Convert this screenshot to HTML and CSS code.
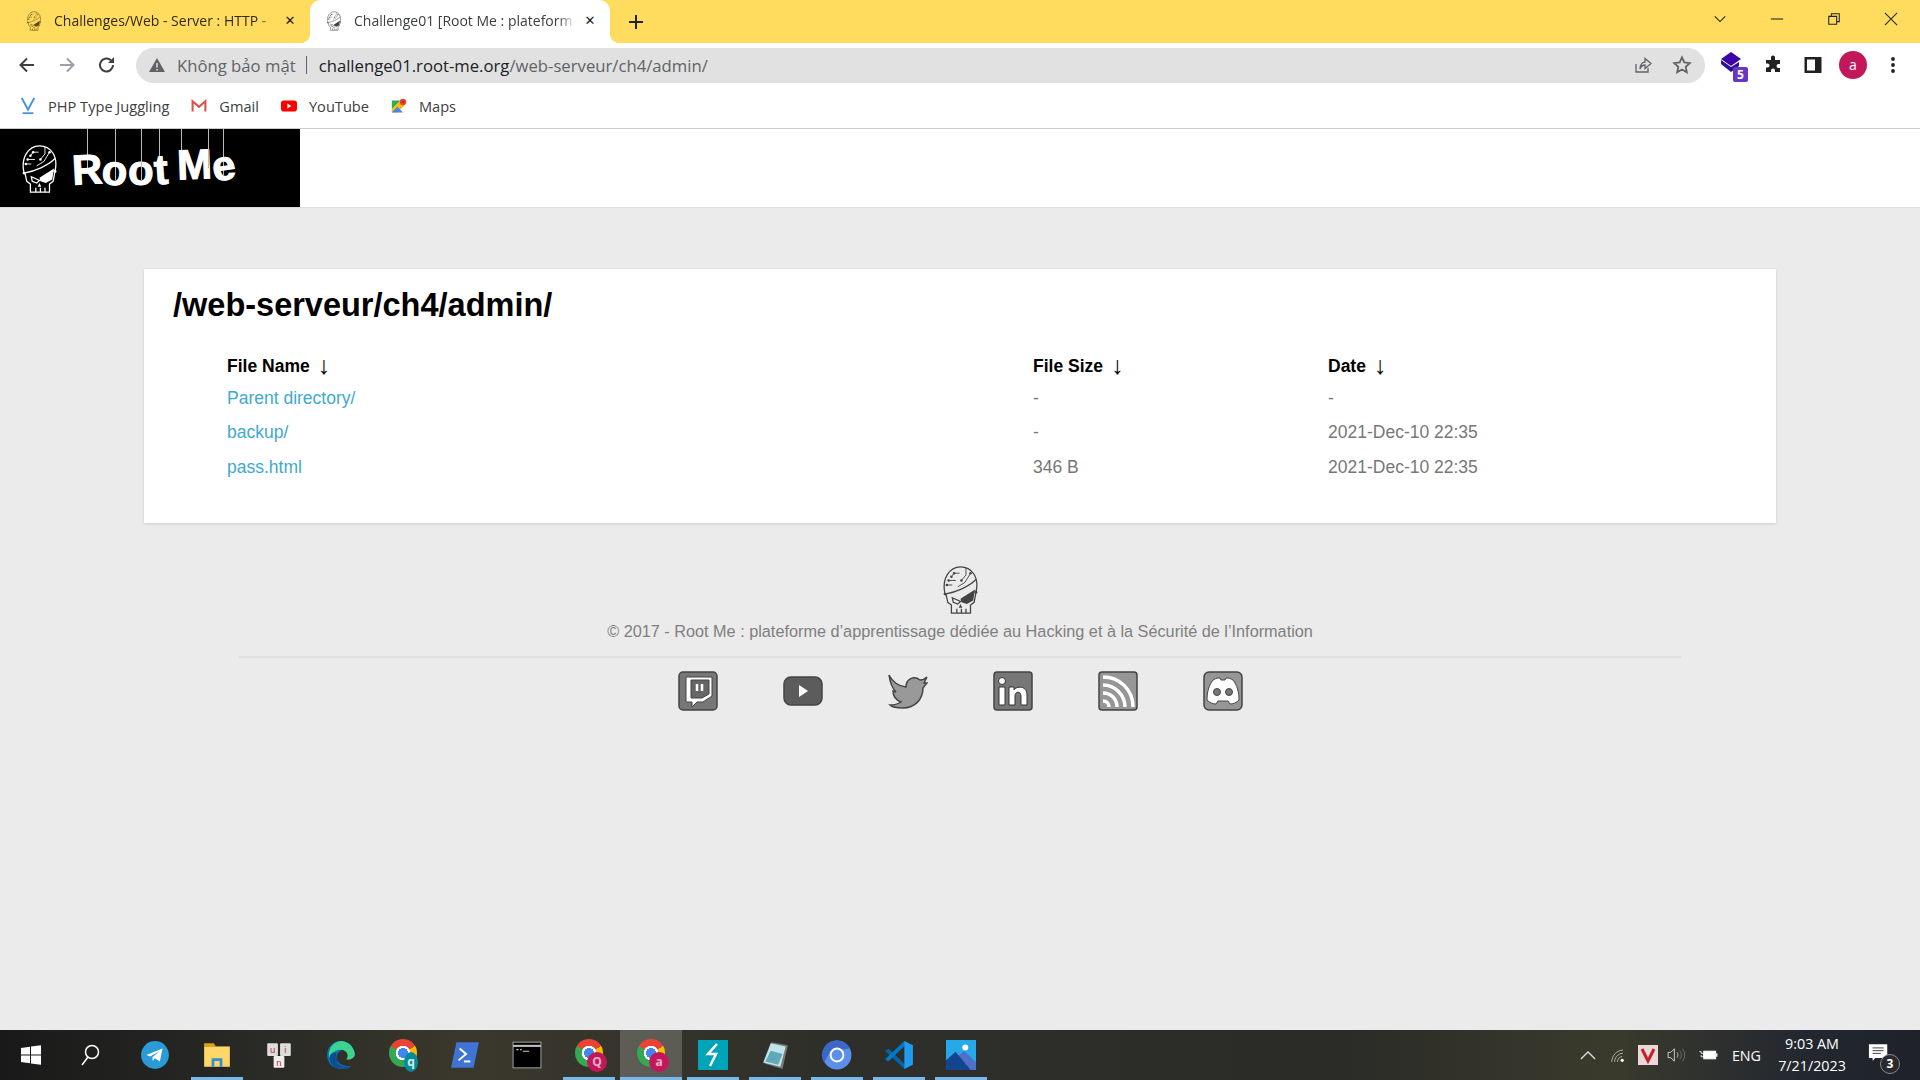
FILE: index.html
```html
<!DOCTYPE html>
<html>
	<head>
		<meta charset="utf-8">
		<title>Challenge01 [Root Me : plateforme]</title>
		<link rel="stylesheet" href="styles.css">
	</head>
	<body>
		<svg class="sprite">
			<symbol id="skull" viewBox="10 3 40 55">
				<g fill="none" stroke="currentColor" stroke-width="1.400">
					<path d="M13 35C9 18 18 5 30 5S51 16 47 33"/>
					<path d="M13 35C25 33 39 27 47 19"/>
					<path d="M14 35L16 44L20 47V56H41V47L45 44L47 33"/>
					<path d="M26 56V51M31 56V51M36 56V51"/>
					<path d="M21 39L30 43L27 46L22 44Z"/>
					<path d="M29 12H23L20 16M36 6V14L31 20M25 20H17M41 12L35 22L27 27M21 25H15" stroke-width="1"/>
				</g>
				<path fill="currentColor" d="M30 40L46 30L44 42L37 46L31 44Z"/>
				<path fill="currentColor" d="M30 46L32 50H28Z"/>
				<g fill="currentColor">
					<circle cx="23" cy="12" r="1.400"/><circle cx="20" cy="16" r="1.400"/><circle cx="17" cy="20" r="1.400"/>
					<circle cx="31" cy="20" r="1.400"/><circle cx="41" cy="12" r="1.400"/><circle cx="15" cy="25" r="1.400"/>
					<circle cx="13" cy="35" r="1.600"/><circle cx="47" cy="33" r="1.600"/>
				</g>
			</symbol>
		</svg>

		<div class="tabstrip">
			<div class="tab">
				<svg class="favicon favicon-warm"><use href="#skull"/></svg>
				<span class="tab-title">Challenges/Web - Server : HTTP -</span>
				<span class="tab-close">&#10005;</span>
			</div>
			<div class="tab tab-active">
				<svg class="favicon"><use href="#skull"/></svg>
				<span class="tab-title">Challenge01 [Root Me : plateform</span>
				<span class="tab-close">&#10005;</span>
			</div>
			<svg class="new-tab" viewBox="0 0 16 16"><path d="M8 1V15M1 8H15"/></svg>
			<div class="window-btns">
				<svg viewBox="0 0 16 16"><path d="M2 5L8 11L14 5"/></svg>
				<svg viewBox="0 0 16 16"><path d="M1 8H15"/></svg>
				<svg viewBox="0 0 16 16"><path d="M2 5H11V14H2ZM5 5V2H14V11H11"/></svg>
				<svg viewBox="0 0 16 16"><path d="M1 1L15 15M15 1L1 15"/></svg>
			</div>
		</div>

		<div class="toolbar">
			<div class="tool-btn"><svg viewBox="0 0 20 20"><path class="ic-line" d="M17 10H4M10 3.500L3.500 10L10 16.500"/></svg></div>
			<div class="tool-btn"><svg viewBox="0 0 20 20"><path class="ic-line ic-muted" d="M3 10H16M10 3.500L16.500 10L10 16.500"/></svg></div>
			<div class="tool-btn"><svg viewBox="0 0 20 20"><path class="ic-line" d="M16 10A6.500 6.500 0 1 1 14 5.300"/><path class="ic-fill" d="M17 2V8H11Z"/></svg></div>
			<div class="address">
				<svg class="warn" viewBox="0 0 18 18"><path d="M9 2L17 16H1Z" fill="#5f6368"/><path d="M9 7V11.500M9 13V14.500" stroke="#e1e1e1" stroke-width="1.500"/></svg>
				<span class="insecure">Không bảo mật</span>
				<span class="addr-sep"></span>
				<span class="url"><b>challenge01.root-me.org</b>/web-serveur/ch4/admin/</span>
				<div class="tool-btn addr-share"><svg viewBox="0 0 20 20"><path class="ic-thin" d="M3 9V17H15V13M7 14C7 9 10 7 12 7V3.500L18 8.500L12 13.500V10C10 10 8 11 7 14Z"/></svg></div>
				<div class="tool-btn"><svg viewBox="0 0 20 20"><path class="ic-star" d="M10 2.500L12.300 7.500L17.800 8.100L13.700 11.800L14.800 17.200L10 14.500L5.200 17.200L6.300 11.800L2.200 8.100L7.700 7.500Z"/></svg></div>
			</div>
			<div class="tool-right">
				<div class="tool-btn ext-btn">
					<svg viewBox="0 0 24 24"><path fill="#3d05a8" d="M12 1L22 8L12 15L2 8Z"/><path fill="#2c0f9e" d="M2 9L12 16L20 11V15L12 21L2 13Z"/></svg>
					<span class="ext-badge">5</span>
				</div>
				<div class="tool-btn"><svg viewBox="0 0 20 20"><path class="ic-dark" d="M8 2A2 2 0 0 1 12 3V5H17V9H15.500A2 2 0 0 0 15.500 13H17V17H12V15.500A2 2 0 0 0 8 15.500V17H3V12.500H4.500A2 2 0 0 0 4.500 8.500H3V5H8Z"/></svg></div>
				<div class="tool-btn"><svg viewBox="0 0 20 20"><path class="ic-dark" fill-rule="evenodd" d="M1.500 2H18.500V18H1.500ZM4 4.500V15.500H12V4.500Z"/></svg></div>
				<div class="tool-btn"><span class="avatar">a</span></div>
				<div class="tool-btn"><svg viewBox="0 0 20 20"><g class="ic-dark"><circle cx="10" cy="4" r="1.900"/><circle cx="10" cy="10" r="1.900"/><circle cx="10" cy="16" r="1.900"/></g></svg></div>
			</div>
		</div>

		<div class="bookmarks">
			<div class="bookmark">
				<svg viewBox="0 0 16 20"><path d="M1 1L8 14L15 1" fill="none" stroke="#4a90d9" stroke-width="2.200"/><path d="M2 18H14" stroke="#4a90d9" stroke-width="2"/></svg>
				<span>PHP Type Juggling</span>
			</div>
			<div class="bookmark">
				<svg viewBox="0 0 20 16"><path d="M2 15V2L10 9L18 2V15" fill="none" stroke="#d9534a" stroke-width="2.600"/></svg>
				<span>Gmail</span>
			</div>
			<div class="bookmark">
				<svg viewBox="0 0 20 16"><rect y="1" width="20" height="14" rx="3.500" fill="#f00"/><path d="M8 5L13 8L8 11Z" fill="#fff"/></svg>
				<span>YouTube</span>
			</div>
			<div class="bookmark">
				<svg viewBox="0 0 20 20"><path d="M1 3L12 3L1 14Z" fill="#34a853"/><path d="M12 3L1 14V18H8L17 9Z" fill="#fbbc04"/><path d="M1 18L8 11L15 18Z" fill="#4285f4"/><circle cx="15" cy="5" r="4" fill="#ea4335"/><circle cx="15" cy="5" r="1.400" fill="#a52714"/></svg>
				<span>Maps</span>
			</div>
		</div>

		<div class="page">
			<div class="site-header">
				<div class="logo">
					<svg class="logo-skull"><use href="#skull"/></svg>
					<div class="logo-word">
						<span class="letter letter-r"><span class="glyph glyph-r">R</span></span>
						<span class="letter letter-o"><span class="glyph glyph-o">o</span></span>
						<span class="letter letter-o"><span class="glyph">o</span></span>
						<span class="letter letter-t"><span class="glyph glyph-t">t</span></span>
						<span class="letter letter-m"><span class="glyph glyph-m">M</span></span>
						<span class="letter letter-e"><span class="glyph glyph-e">e</span></span>
					</div>
				</div>
			</div>

			<div class="card">
				<h1>/web-serveur/ch4/admin/</h1>
				<table class="listing">
					<tr>
						<th class="col-name">File Name <span class="sort">↓</span></th>
						<th class="col-size">File Size <span class="sort">↓</span></th>
						<th>Date <span class="sort">↓</span></th>
					</tr>
					<tr>
						<td><a href="#">Parent directory/</a></td>
						<td>-</td>
						<td>-</td>
					</tr>
					<tr>
						<td><a href="#">backup/</a></td>
						<td>-</td>
						<td>2021-Dec-10 22:35</td>
					</tr>
					<tr>
						<td><a href="#">pass.html</a></td>
						<td>346 B</td>
						<td>2021-Dec-10 22:35</td>
					</tr>
				</table>
			</div>

			<div class="site-footer">
				<svg class="footer-skull"><use href="#skull"/></svg>
				<p class="copyright">© 2017 - Root Me : plateforme d’apprentissage dédiée au Hacking et à la Sécurité de l’Information</p>
				<div class="socials">
					<svg viewBox="0 0 40 40"><rect class="soc-box" x="1" y="1" width="38" height="38" rx="4"/><path d="M8 6H34V25L25 31H19L14 36V31H8Z" fill="#fff" stroke="#444" stroke-width="1"/><path d="M13 9H31V23L24 27H13Z" fill="#666" stroke="#444"/><path d="M19 13V20M24 13V20" stroke="#fff" stroke-width="2.500"/></svg>
					<svg viewBox="0 0 40 40"><rect x="1" y="6" width="38" height="28" rx="7" fill="#5c5c5c" stroke="#444" stroke-width="1.500"/><path d="M16 14L25 20L16 26Z" fill="#fff"/></svg>
					<svg viewBox="0 0 40 40"><path d="M1 4C5 12 10 15 18 16C18 8 26 4 32 9C34 9 37 8 39 6L36 12L39 12C37 14 36 16 35 17C35 28 27 37 15 37C9 37 4 36 2 34C7 34 10 33 13 31C8 29 5 25 5 20L8 21C4 17 2 11 1 4Z" fill="#999" stroke="#444" stroke-width="1.500"/></svg>
					<svg viewBox="0 0 40 40"><rect class="soc-box" x="1" y="1" width="38" height="38" rx="3"/><circle cx="9" cy="10" r="3.500" fill="#fff" stroke="#333"/><path d="M6 16H12V34H6ZM16 16H21V19C23 15 34 14 34 24V34H28V25C28 20 22 20 22 25V34H16Z" fill="#fff" stroke="#333"/></svg>
					<svg viewBox="0 0 40 40"><rect class="soc-box soc-light" x="1" y="1" width="38" height="38" rx="3"/><g fill="none" stroke="#fff" stroke-width="3.500"><path d="M5 6C22 6 35 19 35 36"/><path d="M5 14C17 14 27 24 27 36"/><path d="M5 22C13 22 19 28 19 36"/><path d="M5 30C9 30 11 33 11 36"/></g></svg>
					<svg viewBox="0 0 40 40"><rect class="soc-box soc-light" x="1" y="1" width="38" height="38" rx="5"/><path d="M10 9C13 7 15 7 17 7L18 9H22L23 7C25 7 27 7 30 9C34 14 36 21 36 29C33 32 30 33 27 33L25 30H15L13 33C10 33 7 32 4 29C4 21 6 14 10 9Z" fill="#fff" stroke="#444"/><circle cx="14" cy="21" r="3.500" fill="#777" stroke="#444"/><circle cx="26" cy="21" r="3.500" fill="#777" stroke="#444"/></svg>
				</div>
			</div>
		</div>

		<div class="taskbar">
			<div class="task-item task-small"><svg viewBox="0 0 24 24"><path fill="#fff" d="M2 5L11 3.800V11.500H2ZM12 3.600L22 2.200V11.500H12ZM2 12.500H11V20.200L2 19ZM12 12.500H22V21.800L12 20.400Z"/></svg></div>
			<div class="task-item task-small task-search"><svg viewBox="0 0 24 24"><circle cx="14" cy="9" r="6.500" fill="none" stroke="#fff" stroke-width="1.500"/><path d="M10 14L4 22" stroke="#fff" stroke-width="1.500"/></svg></div>
			<div class="task-item"><svg viewBox="0 0 28 28"><circle cx="14" cy="14" r="13" fill="#2a9bd6"/><path d="M6 14L21 8L18.500 20L14 17L12 19.500L11.500 16L18 10.500L9.500 15.500Z" fill="#fff"/></svg></div>
			<div class="task-item task-open"><svg viewBox="0 0 28 28"><path fill="#e0a010" d="M2 3H11L13 6H2Z"/><path fill="#ffd768" d="M2 6H26V25H2Z"/><path fill="#2f8fd8" d="M9 25V17H19V25H16.500V19.500H11.500V25Z"/></svg></div>
			<div class="task-item"><svg viewBox="0 0 28 28"><rect x="3" y="3" width="10" height="12" rx="1" fill="#ddd"/><rect x="15" y="3" width="10" height="12" rx="1" fill="#ddd"/><rect x="9" y="15" width="10" height="11" rx="1" fill="#eee"/><text class="key-text" x="8" y="12">u</text><text class="key-text" x="20" y="12">i</text><text class="key-text" x="14" y="24">n</text></svg></div>
			<div class="task-item"><svg viewBox="0 0 28 28"><path fill="#0c6fc0" d="M14 1C6 1 1 7 1 14C1 22 7 27 15 27C19 27 22 26 24 24C18 25 11 23 10 17C9.500 12 14 9 17 9C22 9 27 12 27 15C27 7 21 1 14 1Z"/><path fill="#3bd38f" d="M14 1C20 1 26 6 27 13C27 17 22 19 19 18C22 14 19 9 14 9C9 9 5 12 3 17C1 9 7 1 14 1Z"/><path fill="#0b4e91" d="M10 17C9 23 16 27 24 24C20 27 10 29 5 22C3 19 3 16 4 14C5 12 8 11 10 12C9 13 9.600 15 10 17Z"/></svg></div>
			<div class="task-item">
				<span class="chrome-icon"><span class="chrome-badge chrome-badge-teal">q</span></span>
			</div>
			<div class="task-item"><svg viewBox="0 0 28 28"><path fill="#3f74d6" d="M6 2H27L22 26H1Z"/><path d="M9 8L15 13L8 19" fill="none" stroke="#fff" stroke-width="1.800"/><path d="M13 20H19" stroke="#fff" stroke-width="1.800"/></svg></div>
			<div class="task-item"><svg viewBox="0 0 28 28"><rect x="1" y="2" width="26" height="24" fill="#000" stroke="#999"/><path d="M1 5.500H27" stroke="#bbb" stroke-width="2"/><path d="M4 9H6M7.500 9H9M10 10.500H16" stroke="#ccc"/></svg></div>
			<div class="task-item task-open">
				<span class="chrome-icon"><span class="chrome-badge">Q</span></span>
			</div>
			<div class="task-item task-open task-current">
				<span class="chrome-icon"><span class="chrome-badge">a</span></span>
			</div>
			<div class="task-item task-open"><svg viewBox="0 0 30 30"><rect width="30" height="30" fill="#00a4b8"/><path d="M19 4L10 14L18 14L12 26" fill="none" stroke="#fff" stroke-width="2.500"/></svg></div>
			<div class="task-item task-open"><svg viewBox="0 0 28 28"><path fill="#777" d="M11 2L26 5L21 27L4 22Z"/><path fill="#bfe4ea" d="M10 3L24 6L19 25L3 21Z"/><path fill="#5fa9b8" d="M10 10L21 13L17 23L5 20Z"/></svg></div>
			<div class="task-item task-open"><svg viewBox="0 0 28 28"><circle cx="14" cy="14" r="13.500" fill="#5c8fe8"/><path fill="#3b67c9" d="M14 .500A13.500 13.500 0 0 0 2 21L8 10L26 8A13.500 13.500 0 0 0 14 .500Z"/><circle cx="14" cy="14" r="6" fill="#5c8fe8" stroke="#fff" stroke-width="1.800"/></svg></div>
			<div class="task-item task-open"><svg viewBox="0 0 28 28"><path fill="#0065a9" d="M1 10L4 8L21 24L19 27Z"/><path fill="#007acc" d="M1 18L4 20L21 4L19 1Z"/><path fill="#1f9cf0" d="M19 1L27 5V23L19 27Z"/></svg></div>
			<div class="task-item task-open"><svg viewBox="0 0 28 28"><rect width="28" height="28" y="0" fill="#27a9e8"/><circle cx="18" cy="7" r="2.800" fill="#fff"/><path fill="#4f70c8" d="M10 16L17 10L28 21V28H14Z"/><path fill="#13448e" d="M0 19L9 11L23 28H0Z"/></svg></div>

			<div class="tray">
				<svg class="tray-chevron" viewBox="0 0 18 10"><path d="M1 9L9 1L17 9"/></svg>
				<svg class="tray-wifi" viewBox="0 0 20 18"><g fill="none" stroke="#ccc" stroke-width="1"><path d="M1 17C1 10 6 3 15 2"/><path d="M4.500 17C4.500 12 8 7 15 6"/><path d="M8 17C8 14 10 11 14 10"/></g><circle cx="14" cy="15" r="2" fill="#fff"/></svg>
				<svg class="tray-v" viewBox="0 0 20 20"><rect width="20" height="20" fill="#ecd8d8"/><path d="M4 4L10 16L16 4" fill="none" stroke="#c02028" stroke-width="3"/></svg>
				<svg class="tray-sound" viewBox="0 0 22 18"><path d="M1 6H4L8 2V16L4 12H1Z" fill="none" stroke="#ddd"/><path d="M11 6C12.500 8 12.500 10 11 12" fill="none" stroke="#ccc"/><path d="M14 4C16.500 7 16.500 11 14 14" fill="none" stroke="#777"/><path d="M17 2C20.500 6 20.500 12 17 16" fill="none" stroke="#777"/></svg>
				<svg class="tray-battery" viewBox="0 0 22 14"><path d="M1 3H3V5H6V9H3V7" fill="none" stroke="#fff"/><rect x="6" y="2.500" width="14" height="9" fill="#fff" stroke="#fff"/><rect x="20.500" y="5" width="1.500" height="4" fill="#fff"/></svg>
				<span class="tray-lang">ENG</span>
				<div class="clock"><span>9:03 AM</span><span>7/21/2023</span></div>
				<div class="notify">
					<svg viewBox="0 0 24 20"><path d="M1 1H21V16H8L5 19V16H1Z" fill="#fff"/><path d="M5 5H17M5 8H17M5 11H14" stroke="#333"/></svg>
					<span class="notify-count">3</span>
				</div>
			</div>
		</div>
	</body>
</html>
```

FILE: styles.css
```css
*{
	margin: 0;
	padding: 0;
	box-sizing: border-box;
}
html,body{
	height: 100%;
	overflow: hidden;
}
body{
	display: flex;
	flex-direction: column;
	width: 1920px;
	height: 1080px;
	font-family: "Open Sans","Liberation Sans",sans-serif;
	background: #ebebeb;
}
.sprite{
	display: none;
}

/* browser tabs */
.tabstrip{
	display: flex;
	align-items: stretch;
	height: 43px;
	padding-left: 10px;
	background: #ffdc5d;
	color: #2f2b18;
}
.tab{
	display: flex;
	align-items: center;
	gap: 12px;
	width: 300px;
	padding: 0 12px 2px 16px;
	font-size: 14px;
	position: relative;
}
.tab-active{
	background: #fff;
	border-radius: 11px 11px 0 0;
	color: #3c4043;
}
.tab-active::before,
.tab-active::after{
	content: "";
	position: absolute;
	bottom: 0;
	width: 10px;
	height: 10px;
}
.tab-active::before{
	left: -10px;
	background: radial-gradient(circle at 0 0,transparent 10px,#fff 10.5px);
}
.tab-active::after{
	right: -10px;
	background: radial-gradient(circle at 100% 0,transparent 10px,#fff 10.5px);
}
.favicon{
	flex: none;
	width: 16px;
	height: 20px;
	color: #444;
}
.favicon-warm{
	color: #5c4a10;
}
.tab-title{
	flex: 1;
	overflow: hidden;
	white-space: nowrap;
	-webkit-mask-image: linear-gradient(90deg,#000 92%,transparent);
	mask-image: linear-gradient(90deg,#000 92%,transparent);
}
.tab-close{
	flex: none;
	width: 16px;
	margin-left: -6px;
	text-align: center;
	font-size: 13px;
	font-weight: bold;
	font-family: "DejaVu Sans",sans-serif;
	color: #222;
}
.new-tab{
	align-self: center;
	width: 16px;
	height: 16px;
	margin-left: 18px;
	fill: none;
	stroke: #222;
	stroke-width: 2;
}
.window-btns{
	display: flex;
	align-items: center;
	gap: 43px;
	margin-left: auto;
	padding: 0 22px 6px 0;
}
.window-btns svg{
	width: 14px;
	height: 14px;
	fill: none;
	stroke: #222;
	stroke-width: 1.200;
}

/* browser toolbar */
.toolbar{
	display: flex;
	align-items: center;
	height: 43px;
	padding: 1px 0 0 7px;
	background: #fff;
}
.tool-btn{
	flex: none;
	display: flex;
	align-items: center;
	justify-content: center;
	width: 40px;
	height: 35px;
	position: relative;
}
.tool-btn svg{
	width: 20px;
	height: 20px;
}
.ic-line{
	fill: none;
	stroke: #3c4043;
	stroke-width: 2;
}
.ic-muted{
	stroke: #9aa0a6;
}
.ic-fill{
	fill: #3c4043;
}
.ic-thin{
	fill: none;
	stroke: #5f6368;
	stroke-width: 1.300;
}
.ic-star{
	fill: none;
	stroke: #5f6368;
	stroke-width: 1.800;
}
.ic-dark{
	fill: #202124;
}
.address{
	flex: 1;
	display: flex;
	align-items: center;
	height: 35px;
	margin-left: 9px;
	padding: 0 3px 0 12px;
	border-radius: 18px;
	background: #e1e1e1;
	font-size: 16.700px;
}
.warn{
	flex: none;
	width: 18px;
	height: 18px;
}
.insecure{
	margin-left: 11px;
	color: #5f6368;
}
.addr-sep{
	width: 1px;
	height: 18px;
	margin: 0 12px 0 10px;
	background: #5f6368;
}
.url{
	flex: 1;
	color: #5f6368;
}
.url b{
	font-weight: normal;
	color: #202124;
}
.addr-share{
	margin-right: -1px;
}
.tool-right{
	display: flex;
	align-items: center;
	margin: 0 7px 0 8px;
}
.ext-btn svg{
	width: 24px;
	height: 24px;
	margin: 0 4px 4px 0;
}
.ext-badge{
	position: absolute;
	right: 5px;
	bottom: 1px;
	width: 15px;
	height: 15px;
	background: #6a35c2;
	border-radius: 2px;
	color: #fff;
	font-size: 12px;
	font-weight: bold;
	line-height: 15px;
	text-align: center;
}
.avatar{
	width: 28px;
	height: 28px;
	border-radius: 50%;
	background: #c2185b;
	color: #fff;
	font-size: 14px;
	line-height: 27px;
	text-align: center;
}

/* bookmarks bar */
.bookmarks{
	display: flex;
	align-items: center;
	gap: 22px;
	height: 43px;
	padding: 0 0 3px 20px;
	background: #fff;
	border-bottom: 1px solid #ccc;
	font-size: 14.600px;
	color: #3c4043;
}
.bookmark{
	display: flex;
	align-items: center;
	gap: 12px;
}
.bookmark svg{
	flex: none;
	width: 16px;
	height: 18px;
}

/* site */
.page{
	flex: 1;
	overflow: hidden;
	font-family: "Liberation Sans",Arial,sans-serif;
	font-size: 17.500px;
}
.site-header{
	height: 79px;
	background: #fff;
	border-bottom: 1px solid #ddd;
}
.logo{
	display: flex;
	width: 300px;
	height: 78px;
	padding-left: 21px;
	overflow: hidden;
	background: #000;
	color: #fff;
}
.logo-skull{
	flex: none;
	width: 37px;
	height: 50px;
	margin-top: 15px;
}
.logo-word{
	display: flex;
	margin-left: 14px;
	padding-top: 20px;
	font-size: 42px;
	font-weight: bold;
	line-height: 42px;
	-webkit-text-stroke: 1px #fff;
}
.letter{
	position: relative;
	display: block;
}
.letter::before{
	content: "";
	position: absolute;
	bottom: 34px;
	left: 50%;
	width: 1px;
	height: 60px;
	background: #bbb;
}
.glyph{
	display: block;
}
.glyph-r{
	transform: rotate(-3deg);
}
.glyph-o{
	transform: rotate(5deg);
}
.glyph-t{
	transform: rotate(-4deg);
}
.glyph-m{
	transform: rotate(-2deg);
}
.glyph-e{
	transform: rotate(-8deg);
}
.letter-o{
	transform: translateY(1px);
}
.letter-o::before{
	bottom: 28px;
}
.letter-t::before{
	left: 40%;
}
.letter-m{
	margin-left: 9px;
	transform: translateY(-5px);
}
.letter-m::after{
	content: "";
	position: absolute;
	bottom: 34px;
	left: 31px;
	width: 1px;
	height: 60px;
	background: #bbb;
}
.letter-m::before{
	left: 4px;
}
.letter-e{
	transform: translateY(-4px);
}
.letter-e::before{
	bottom: 28px;
}

.card{
	width: 1632px;
	height: 254px;
	margin: 61px auto 0;
	padding: 16px 29px;
	background: #fff;
	box-shadow: 0 1px 3px rgba(0,0,0,.12);
}
.card h1{
	font-size: 32.500px;
	line-height: 40px;
	color: #000;
}
.listing{
	margin: 26px 0 0 54px;
	border-collapse: collapse;
	color: #777;
}
.listing th{
	height: 30px;
	padding: 0;
	text-align: left;
	font-size: 17.500px;
	color: #000;
	white-space: nowrap;
}
.listing td{
	height: 34.500px;
	padding: 0;
}
.col-name{
	width: 806px;
}
.col-size{
	width: 295px;
}
.sort{
	margin-left: 3px;
	font-weight: normal;
	font-size: 25px;
	line-height: 0;
	vertical-align: -2px;
}
.listing a{
	color: #3fa9d0;
	text-decoration: none;
}

.site-footer{
	display: flex;
	flex-direction: column;
	align-items: center;
	padding-top: 42px;
	color: #7f7f7f;
}
.footer-skull{
	width: 37px;
	height: 50px;
	color: #444;
}
.copyright{
	margin-top: 6px;
	font-size: 16.250px;
	line-height: 20px;
}
.socials{
	display: flex;
	justify-content: center;
	gap: 65px;
	width: 1442px;
	margin-top: 15px;
	padding-top: 13px;
	border-top: 2px solid #e0e0e0;
}
.socials svg{
	width: 40px;
	height: 40px;
}
.soc-box{
	fill: #777;
	stroke: #444;
	stroke-width: 1.500;
}
.soc-light{
	fill: #969696;
}

/* windows taskbar */
.taskbar{
	display: flex;
	align-items: stretch;
	flex: none;
	height: 50px;
	background: linear-gradient(90deg,#191919 0,#2a2a26 14%,#3a382c 24%,#2e2e2a 45%,#2b2b28 70%,#3a3a2c 84%,#232830 94%,#1e2128 100%);
}
.task-item{
	flex: none;
	display: flex;
	align-items: center;
	justify-content: center;
	width: 62px;
	position: relative;
}
.task-item svg{
	width: 30px;
	height: 30px;
}
.task-small svg{
	width: 24px;
	height: 24px;
}
.task-search svg{
	margin-right: 6px;
}
.task-open::after{
	content: "";
	position: absolute;
	left: 5px;
	right: 5px;
	bottom: 0;
	height: 3px;
	background: #76b9ed;
}
.task-current{
	background: rgba(255,255,255,.2);
}
.task-current::after{
	left: 0;
	right: 0;
}
.key-text{
	font-family: "Liberation Sans",sans-serif;
	font-size: 9px;
	fill: #c03030;
	text-anchor: middle;
}
.chrome-icon{
	display: block;
	width: 28px;
	height: 28px;
	margin-bottom: 4px;
	border-radius: 50%;
	background:
		radial-gradient(circle,#4285f4 0 5px,#fff 5px 7px,transparent 7.500px),
		conic-gradient(from -60deg,#ea4335 0 120deg,#fbbc04 120deg 215deg,#34a853 215deg 360deg);
	position: relative;
}
.chrome-badge{
	position: absolute;
	right: -4px;
	bottom: -5px;
	width: 20px;
	height: 20px;
	border-radius: 50%;
	background: #c2185b;
	color: #f0b0c8;
	font-size: 12px;
	font-weight: bold;
	line-height: 19px;
	text-align: center;
}
.chrome-badge-teal{
	width: 14px;
	right: -1px;
	background: #0b8a96;
	color: #cfeef0;
}
.tray{
	display: flex;
	align-items: center;
	margin-left: auto;
	color: #fff;
	font-family: "Open Sans",sans-serif;
	font-size: 14.300px;
}
.tray-chevron{
	width: 16px !important;
	height: 9px !important;
	fill: none;
	stroke: #ddd;
	stroke-width: 1.500;
}
.tray-wifi{
	width: 16px;
	height: 15px;
	margin-left: 15px;
}
.tray-v{
	width: 20px;
	height: 20px;
	margin-left: 11px;
}
.tray-sound{
	width: 20px;
	height: 16px;
	margin-left: 9px;
}
.tray-battery{
	width: 20px;
	height: 12px;
	margin-left: 11px;
}
.tray-lang{
	margin-left: 14px;
}
.clock{
	display: flex;
	flex-direction: column;
	align-items: center;
	gap: 4px;
	width: 72px;
	margin-left: 15px;
	line-height: 18px;
}
.notify{
	width: 24px;
	height: 24px;
	margin: 0 28px 0 20px;
	position: relative;
}
.notify svg{
	display: block;
	width: 22px;
	height: 19px;
}
.notify-count{
	position: absolute;
	right: -8px;
	bottom: -7px;
	width: 20px;
	height: 20px;
	border: 1px solid #888;
	border-radius: 50%;
	background: #2a2a2e;
	font-size: 12px;
	font-weight: bold;
	line-height: 18px;
	text-align: center;
}
```
